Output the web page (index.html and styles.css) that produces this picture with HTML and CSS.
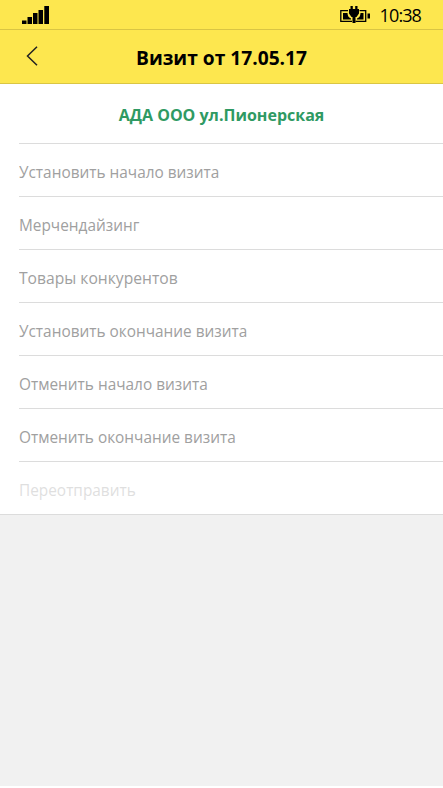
FILE: index.html
```html
<!DOCTYPE html>
<html lang="ru">
<head>
<meta charset="utf-8">
<title>Визит от 17.05.17</title>
<link rel="stylesheet" href="styles.css">
</head>
<body>
<div class="screen">
  <div class="status">
    <svg class="signal" width="27" height="18" viewBox="0 0 27 18"><path d="M0 14.500h4.500V18H0zM5.500 11H10v7H5.500zM11 7h4.500v11H11zM16.500 4H21v14h-4.500zM22.300 0H27v18h-4.700z"/></svg>
    <div class="right">
      <svg class="battery" width="30" height="17" viewBox="0 0 30 17"><path d="M8 4.700H.8v10.600H12M19.500 4.700h6.200v10.600H15.500" fill="none" stroke="#000" stroke-width="1.300"/><path d="M3 7h4.500C7.500 10 9 12 11 12.500V13.500H3zM20.500 7h3v6.500H17v-1C19 12 20.500 10 20.500 7zM27.500 7.500H30v5h-2.500zM10.500 0h2.300v3h2.400V0h2.300v3H19v4.500L16.500 11h-1v6h-3v-6h-1L9 7.500V3h1.500z"/></svg>
      <span class="time">10:38</span>
    </div>
  </div>
  <header class="header">
    <svg class="back" width="12" height="20" viewBox="0 0 12 20"><path d="M11 .7 1.500 10 11 19.300" fill="none" stroke="#222" stroke-width="1.500"/></svg>
    <h1 class="title">Визит от 17.05.17</h1>
  </header>
  <main class="card">
    <h2 class="client">АДА ООО ул.Пионерская</h2>
    <ul class="menu">
      <li><span>Установить начало визита</span></li>
      <li><span>Мерчендайзинг</span></li>
      <li><span class="wide">Товары конкурентов</span></li>
      <li><span>Установить окончание визита</span></li>
      <li><span>Отменить начало визита</span></li>
      <li><span>Отменить окончание визита</span></li>
      <li class="disabled"><span>Переотправить</span></li>
    </ul>
  </main>
</div>
</body>
</html>
```
FILE: styles.css
```css
* { box-sizing: border-box; }
body { margin: 0; background: #fff; font-family: "Open Sans", "Noto Sans", sans-serif; }
.screen { height: 786px; background: #f1f1f1; overflow: hidden; }
.status { height: 30px; background: #fde74f; border-bottom: 1px solid #d9c543; display: flex; justify-content: space-between; padding: 6px 22px 0 22px; }
.signal, .battery, .back { display: block; }
.right { display: flex; gap: 10px; }
.time { font-size: 18px; line-height: 19px; letter-spacing: -0.900px; }
.header { height: 54px; background: #fde74f; border-bottom: 1px solid #dac644; display: flex; align-items: center; justify-content: center; position: relative; }
.back { position: absolute; left: 26px; top: 16px; }
.title { margin: 0; padding-top: 2px; font-size: 19.200px; font-weight: 700; line-height: 28px; }
.card { background: #fff; border-bottom: 1px solid #dcdcdc; height: 431px; }
.client { margin: 0; height: 59px; line-height: 63px; text-align: center; color: #2f9a63; font-size: 16px; font-weight: 700; }
.menu { list-style: none; margin: 0 0 0 19px; padding: 0; }
.menu li { height: 53px; border-top: 1px solid #dcdcdc; font-size: 16.500px; line-height: 56px; color: #a0a0a0; }
.menu span { display: inline-block; transform: scaleX(.932); transform-origin: 0 50%; }
.menu .wide { transform: scaleX(.948); }
.menu .disabled { color: #dfdfdf; }
```
